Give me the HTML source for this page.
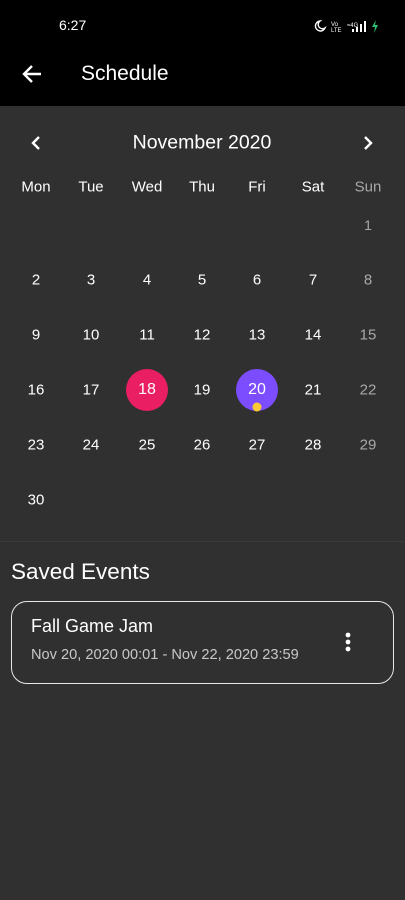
<!DOCTYPE html>
<html><head><meta charset="utf-8"><style>
*{margin:0;padding:0;box-sizing:border-box}
body{width:405px;height:900px;background:#303030;font-family:"Liberation Sans",sans-serif;color:#fff;position:relative;overflow:hidden}
.top{position:absolute;left:0;top:0;width:405px;height:106px;background:#000}
.a{position:absolute;white-space:nowrap}
.c{position:absolute;transform:translate(-50%,-50%);font-size:15px}
.g{color:#a8a8a8}
.circ{position:absolute;width:42px;height:42px;border-radius:50%;transform:translate(-50%,-50%)}
</style></head><body>
<div class="top"></div>
<div class="a" style="left:59px;top:17px;font-size:14px">6:27</div>
<svg class="a" style="left:314px;top:19px" width="70" height="14" viewBox="0 0 70 14">
<path d="M6 2a5 5 0 1 0 5 7 4 4 0 0 1-5-7z" fill="none" stroke="#fff" stroke-width="1.4"/>
<text x="17" y="7" font-size="6" fill="#fff" font-family="Liberation Sans">Vo</text><text x="17" y="13" font-size="6" fill="#fff" font-family="Liberation Sans">LTE</text>
<text x="33" y="8" font-size="6" fill="#fff" font-family="Liberation Sans">≈4G</text>
<rect x="38" y="10" width="2" height="3" fill="#fff"/><rect x="42" y="8" width="2" height="5" fill="#fff"/><rect x="46" y="5" width="2" height="8" fill="#fff"/><rect x="50" y="2" width="2" height="11" fill="#fff"/>
<path d="M62 1l-4 7h3l-1 6 4-8h-3z" fill="#2fbf6f"/></svg>
<svg class="a" style="left:21px;top:64px" width="22" height="20" viewBox="0 0 22 20"><path d="M20 10H3M11 2l-8 8 8 8" fill="none" stroke="#fff" stroke-width="2.4"/></svg>
<div class="a" style="left:81px;top:62px;font-size:21px">Schedule</div>
<svg class="a" style="left:30px;top:135px" width="12" height="16" viewBox="0 0 12 16"><path d="M9 2L3 8l6 6" fill="none" stroke="#fff" stroke-width="2.4"/></svg>
<svg class="a" style="left:362px;top:135px" width="12" height="16" viewBox="0 0 12 16"><path d="M3 2l6 6-6 6" fill="none" stroke="#fff" stroke-width="2.4"/></svg>
<div class="c" style="left:202px;top:143px;font-size:19.5px">November 2020</div>
<div class="c" style="left:36px;top:187px">Mon</div><div class="c" style="left:91px;top:187px">Tue</div><div class="c" style="left:147px;top:187px">Wed</div><div class="c" style="left:202px;top:187px">Thu</div><div class="c" style="left:257px;top:187px">Fri</div><div class="c" style="left:313px;top:187px">Sat</div><div class="c g" style="left:368px;top:187px">Sun</div>
<div class="circ" style="left:147px;top:390px;background:#e91e63"></div>
<div class="circ" style="left:257px;top:390px;background:#7c4dff"></div>
<div class="circ" style="left:257px;top:407px;width:9px;height:9px;background:#fcc934"></div>
<div class="c g" style="left:368px;top:225px;font-size:14px">1</div>
<div class="c" style="left:36px;top:280px">2</div><div class="c" style="left:91px;top:280px">3</div><div class="c" style="left:147px;top:280px">4</div><div class="c" style="left:202px;top:280px">5</div><div class="c" style="left:257px;top:280px">6</div><div class="c" style="left:313px;top:280px">7</div><div class="c g" style="left:368px;top:280px">8</div>
<div class="c" style="left:36px;top:335px">9</div><div class="c" style="left:91px;top:335px">10</div><div class="c" style="left:147px;top:335px">11</div><div class="c" style="left:202px;top:335px">12</div><div class="c" style="left:257px;top:335px">13</div><div class="c" style="left:313px;top:335px">14</div><div class="c g" style="left:368px;top:335px">15</div>
<div class="c" style="left:36px;top:390px">16</div><div class="c" style="left:91px;top:390px">17</div><div class="c" style="left:147px;top:390px;font-size:16px">18</div><div class="c" style="left:202px;top:390px">19</div><div class="c" style="left:257px;top:390px;font-size:16px">20</div><div class="c" style="left:313px;top:390px">21</div><div class="c g" style="left:368px;top:390px">22</div>
<div class="c" style="left:36px;top:445px">23</div><div class="c" style="left:91px;top:445px">24</div><div class="c" style="left:147px;top:445px">25</div><div class="c" style="left:202px;top:445px">26</div><div class="c" style="left:257px;top:445px">27</div><div class="c" style="left:313px;top:445px">28</div><div class="c g" style="left:368px;top:445px">29</div>
<div class="c" style="left:36px;top:500px">30</div>
<div class="a" style="left:0;top:541px;width:405px;height:1px;background:#3a3a3a"></div>
<div class="a" style="left:11px;top:559px;font-size:22.5px">Saved Events</div>
<div class="a" style="left:11px;top:601px;width:383px;height:83px;border:1.5px solid #e8e8e8;border-radius:16px"></div>
<div class="a" style="left:31px;top:616px;font-size:18px">Fall Game Jam</div>
<div class="a" style="left:31px;top:647px;font-size:14.6px;color:#c8c8c8">Nov 20, 2020 00:01 - Nov 22, 2020 23:59</div>
<svg class="a" style="left:344px;top:632px" width="8" height="22" viewBox="0 0 8 22"><circle cx="4" cy="3" r="2.4" fill="#fff"/><circle cx="4" cy="10" r="2.4" fill="#fff"/><circle cx="4" cy="17" r="2.4" fill="#fff"/></svg>
</body></html>
